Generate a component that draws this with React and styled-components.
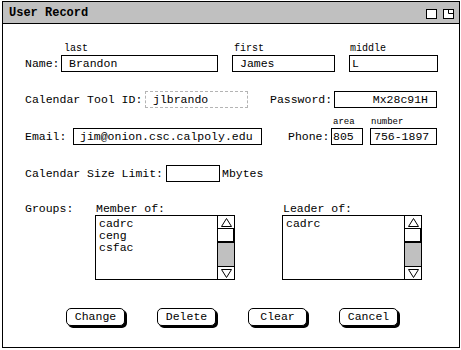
import React from "react";
import styled, { createGlobalStyle } from "styled-components";

const Global = createGlobalStyle`
  html, body { margin: 0; padding: 0; background: #fff; }
  body { font-family: "Liberation Mono", "DejaVu Sans Mono", monospace; font-size: 11.5px; color: #000; }
  * { box-sizing: border-box; }
`;

const Window = styled.div`
  margin: 1px 0 0 2px;
  width: 458px;
  height: 347px;
  border: 1px solid #000;
  display: flex;
  flex-direction: column;
  background: #fff;
`;

const TitleBar = styled.div`
  height: 22px;
  background: #c0c0c0;
  border-bottom: 1px solid #000;
  display: flex;
  align-items: center;
  padding: 0 5px 0 6px;
`;

const Title = styled.div`
  flex: 1;
  font-weight: bold;
  font-size: 12px;
  line-height: 12px;
  padding-top: 1px;
`;

const TitleIcons = styled.div`
  display: flex;
  gap: 6px;
  align-items: center;
  padding-top: 2px;
`;

const Content = styled.div`
  padding: 20px 0 0 22px;
  display: flex;
  flex-direction: column;
`;

const Row = styled.div`
  display: flex;
  align-items: flex-end;
  margin-top: ${(p) => p.$mt || 0}px;
`;

const Label = styled.div`
  width: ${(p) => (p.$w ? `${p.$w}px` : "auto")};
  margin-left: ${(p) => p.$ml || 0}px;
  height: 17px;
  line-height: 17px;
  white-space: nowrap;
`;

const FieldGroup = styled.div`
  display: flex;
  flex-direction: column;
  margin-left: ${(p) => p.$ml || 0}px;
`;

const SmallLabel = styled.div`
  font-size: ${(p) => p.$fs || 10}px;
  line-height: 10px;
  height: 10px;
  padding-left: ${(p) => p.$pl ?? 2}px;
  margin-bottom: 1px;
  white-space: nowrap;
`;

const Field = styled.div`
  width: ${(p) => p.$w}px;
  height: 17px;
  border: 1px ${(p) => (p.$dashed ? "dashed #b4b4b4" : "solid #000")};
  line-height: 15px;
  padding: 0 ${(p) => p.$pr || 0}px 0 ${(p) => p.$pl || 0}px;
  text-align: ${(p) => p.$align || "left"};
  white-space: nowrap;
  overflow: hidden;
  margin-left: ${(p) => p.$ml || 0}px;
  margin-top: ${(p) => p.$mt || 0}px;
`;

const GroupsRow = styled.div`
  display: flex;
  align-items: flex-start;
  margin-top: 21px;
`;

const GroupCol = styled.div`
  display: flex;
  flex-direction: column;
  margin-left: ${(p) => p.$ml || 0}px;
`;

const GroupHeader = styled.div`
  height: 12px;
  line-height: 12px;
  padding-left: ${(p) => p.$pl || 0}px;
  width: ${(p) => (p.$w ? `${p.$w}px` : "auto")};
  white-space: nowrap;
`;

const ListBox = styled.div`
  width: 140px;
  height: 65px;
  border: 1px solid #000;
  display: flex;
`;

const ListItems = styled.div`
  flex: 1;
  padding: 2px 0 0 3px;
  line-height: 12px;
`;

const ScrollBar = styled.div`
  width: 17px;
  border-left: 1px solid #000;
  display: flex;
  flex-direction: column;
`;

const ArrowCell = styled.div`
  height: 13px;
  display: flex;
  align-items: center;
  justify-content: center;
  border-top: ${(p) => (p.$down ? "1px solid #000" : "none")};
  border-bottom: ${(p) => (p.$down ? "none" : "1px solid #000")};
  background: #fff;
`;

const Thumb = styled.div`
  height: 14px;
  background: #fff;
  border-bottom: 2px solid #000;
  border-right: 1px solid #000;
`;

const Track = styled.div`
  flex: 1;
  background: #c0c0c0;
`;

const ButtonRow = styled.div`
  display: flex;
  gap: 32px;
  margin-top: 28px;
  padding-left: 41px;
`;

const Button = styled.div`
  width: 59px;
  height: 18px;
  border: 1px solid #000;
  border-radius: 5px;
  box-shadow: 2px 2px 0 #000;
  display: flex;
  align-items: center;
  justify-content: center;
  line-height: 16px;
  background: #fff;
`;

const Arrow = ({ down }) => (
  <svg width="11" height="9" viewBox="0 0 11 9">
    {down ? (
      <polygon points="0.5,0.5 10.5,0.5 5.5,8.5" fill="none" stroke="#000" strokeWidth="1" />
    ) : (
      <polygon points="5.5,0.5 10.5,8.5 0.5,8.5" fill="none" stroke="#000" strokeWidth="1" />
    )}
  </svg>
);

const List = ({ items }) => (
  <ListBox>
    <ListItems>
      {items.map((it) => (
        <div key={it}>{it}</div>
      ))}
    </ListItems>
    <ScrollBar>
      <ArrowCell>
        <Arrow />
      </ArrowCell>
      <Thumb />
      <Track />
      <ArrowCell $down>
        <Arrow down />
      </ArrowCell>
    </ScrollBar>
  </ListBox>
);

export default function App() {
  return (
    <>
      <Global />
      <Window>
        <TitleBar>
          <Title>User Record</Title>
          <TitleIcons>
            <svg width="11" height="10" viewBox="0 0 11 10">
              <rect x="0.5" y="0.5" width="10" height="9" fill="#fff" stroke="#000" />
            </svg>
            <svg width="11" height="10" viewBox="0 0 11 10">
              <rect x="0.5" y="0.5" width="10" height="9" fill="#fff" stroke="#000" />
              <polyline points="5.5,0.5 5.5,4.5 10.5,4.5" fill="none" stroke="#000" />
            </svg>
          </TitleIcons>
        </TitleBar>
        <Content>
          <Row>
            <Label $w={36}>Name:</Label>
            <FieldGroup>
              <SmallLabel $pl={3}>last</SmallLabel>
              <Field $w={157} $pl={7}>Brandon</Field>
            </FieldGroup>
            <FieldGroup $ml={14}>
              <SmallLabel>first</SmallLabel>
              <Field $w={103} $pl={7}>James</Field>
            </FieldGroup>
            <FieldGroup $ml={14}>
              <SmallLabel $pl={1}>middle</SmallLabel>
              <Field $w={89} $pl={2}>L</Field>
            </FieldGroup>
          </Row>
          <Row $mt={18}>
            <Label $w={120}>Calendar Tool ID:</Label>
            <Field $w={103} $pl={7} $dashed>jlbrando</Field>
            <Label $w={64} $ml={22}>Password:</Label>
            <Field $w={103} $pr={8} $align="right" $mt={1}>Mx28c91H</Field>
          </Row>
          <Row $mt={9}>
            <Label $w={48}>Email:</Label>
            <Field $w={189} $pl={6}>jim@onion.csc.calpoly.edu</Field>
            <Label $w={43} $ml={26}>Phone:</Label>
            <FieldGroup>
              <SmallLabel $fs={9} $pl={2}>area</SmallLabel>
              <Field $w={32} $pl={1}>805</Field>
            </FieldGroup>
            <FieldGroup $ml={7}>
              <SmallLabel $fs={9} $pl={1}>number</SmallLabel>
              <Field $w={67} $pl={3}>756-1897</Field>
            </FieldGroup>
          </Row>
          <Row $mt={20}>
            <Label $w={141}>Calendar Size Limit:</Label>
            <Field $w={54} />
            <Label $ml={2}>Mbytes</Label>
          </Row>
          <GroupsRow>
            <GroupHeader $w={70}>Groups:</GroupHeader>
            <GroupCol>
              <GroupHeader $pl={1}>Member of:</GroupHeader>
              <List items={["cadrc", "ceng", "csfac"]} />
            </GroupCol>
            <GroupCol $ml={47}>
              <GroupHeader $pl={1}>Leader of:</GroupHeader>
              <List items={["cadrc"]} />
            </GroupCol>
          </GroupsRow>
          <ButtonRow>
            <Button>Change</Button>
            <Button>Delete</Button>
            <Button>Clear</Button>
            <Button>Cancel</Button>
          </ButtonRow>
        </Content>
      </Window>
    </>
  );
}
